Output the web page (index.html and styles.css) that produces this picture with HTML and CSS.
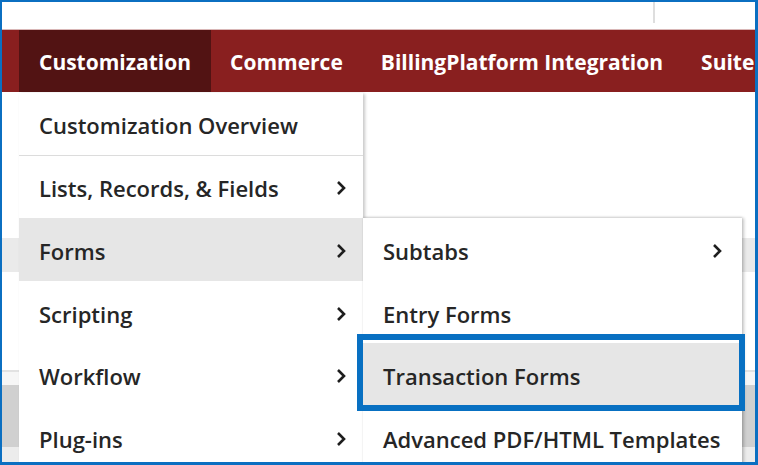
FILE: index.html
```html
<!DOCTYPE html>
<html>
<head>
<meta charset="utf-8">
<link rel="stylesheet" href="styles.css">
</head>
<body>
<div class="frame">
  <div class="topbar"><span class="divider"></span></div>
  <nav class="nav">
    <div class="tab active">Customization
      <ul class="menu">
        <li class="item sep">Customization Overview</li>
        <li class="item">Lists, Records, &amp; Fields<svg class="chev" viewBox="0 0 10 16"><polyline points="2,2 8,8 2,14"/></svg></li>
        <li class="item hover">Forms<svg class="chev" viewBox="0 0 10 16"><polyline points="2,2 8,8 2,14"/></svg>
          <ul class="menu sub">
            <li class="item">Subtabs<svg class="chev" viewBox="0 0 10 16"><polyline points="2,2 8,8 2,14"/></svg></li>
            <li class="item">Entry Forms</li>
            <li class="item hover marked">Transaction Forms<span class="callout"></span></li>
            <li class="item">Advanced PDF/HTML Templates</li>
          </ul>
        </li>
        <li class="item">Scripting<svg class="chev" viewBox="0 0 10 16"><polyline points="2,2 8,8 2,14"/></svg></li>
        <li class="item">Workflow<svg class="chev" viewBox="0 0 10 16"><polyline points="2,2 8,8 2,14"/></svg></li>
        <li class="item">Plug-ins<svg class="chev" viewBox="0 0 10 16"><polyline points="2,2 8,8 2,14"/></svg></li>
      </ul>
    </div>
    <div class="tab">Commerce</div>
    <div class="tab">BillingPlatform Integration</div>
    <div class="tab">SuiteCloud</div>
  </nav>
  <div class="page">
    <div class="band b1"></div>
    <div class="band b2"></div>
    <div class="band b3"></div>
    <div class="band b4"></div>
    <div class="band b5"></div>
    <div class="band b6"></div>
    <div class="band b7"></div>
  </div>
</div>
</body>
</html>
```
FILE: styles.css
```css
html, body {
  margin: 0;
  padding: 0;
  background: #fff;
}
.frame {
  width: 758px;
  height: 465px;
  box-sizing: border-box;
  border-style: solid;
  border-color: #0b6fc1;
  border-width: 2px 3px 3px 2px;
  overflow: hidden;
  font-family: "Open Sans", "Liberation Sans", sans-serif;
  display: flex;
  flex-direction: column;
  position: relative;
}
.topbar {
  height: 27px;
  flex: none;
  position: relative;
  border-bottom: 1px solid #d9b7b7;
}
.divider {
  position: absolute;
  left: 651px;
  top: 0;
  width: 2px;
  height: 21px;
  background: #dedede;
}
.nav {
  height: 62px;
  flex: none;
  background: #891f1f;
  display: flex;
  padding-left: 17px;
  white-space: nowrap;
}
.tab {
  color: #fff;
  font-weight: 700;
  font-size: 21px;
  height: 62px;
  line-height: 64px;
  padding: 0 19px;
  position: relative;
}
.tab.active {
  background: #521313;
  padding: 0 20px;
}
.menu {
  list-style: none;
  margin: 0;
  padding: 0;
  position: absolute;
  left: 0;
  top: 63px;
  width: 344px;
  background: #fff;
  box-shadow: 2px 1px 3px rgba(0,0,0,0.22);
  z-index: 5;
}
.item {
  height: 62.6px;
  box-sizing: border-box;
  padding: 3px 20px 0;
  display: flex;
  align-items: center;
  justify-content: space-between;
  color: #262626;
  font-size: 22px;
  font-weight: 600;
  line-height: 56px;
  position: relative;
  white-space: nowrap;
}
.item.sep {
  border-bottom: 1px solid #dcdcdc;
}
.item.hover {
  background: #e6e6e6;
}
.chev {
  width: 10px;
  height: 16px;
  margin-right: -3px;
  fill: none;
  stroke: #1e1e1e;
  stroke-width: 2.6;
}
.menu.sub {
  left: 344px;
  top: 0;
  width: 379px;
  box-shadow: 2px 0 3px rgba(0,0,0,0.22), 0 -1px 2px rgba(0,0,0,0.1);
}
.menu.sub .chev {
  margin-right: 0;
}
.callout {
  position: absolute;
  left: -6px;
  right: -3px;
  top: -9px;
  bottom: -5px;
  border: 6px solid #0870c2;
  pointer-events: none;
}
.page {
  flex: 1;
  display: flex;
  flex-direction: column;
}
.band { flex: none; }
.b1 { height: 146px; background: #fff; }
.b2 { height: 34px; background: #eaeaea; }
.b3 { height: 98px; background: #fff; border-bottom: 2px solid #e2e2e2; }
.b4 { height: 13px; background: #f6f6f6; }
.b5 { height: 62px; background: #d0d0d0; }
.b6 { height: 20px; background: #ececec; }
.b7 { flex: 1; }
```
